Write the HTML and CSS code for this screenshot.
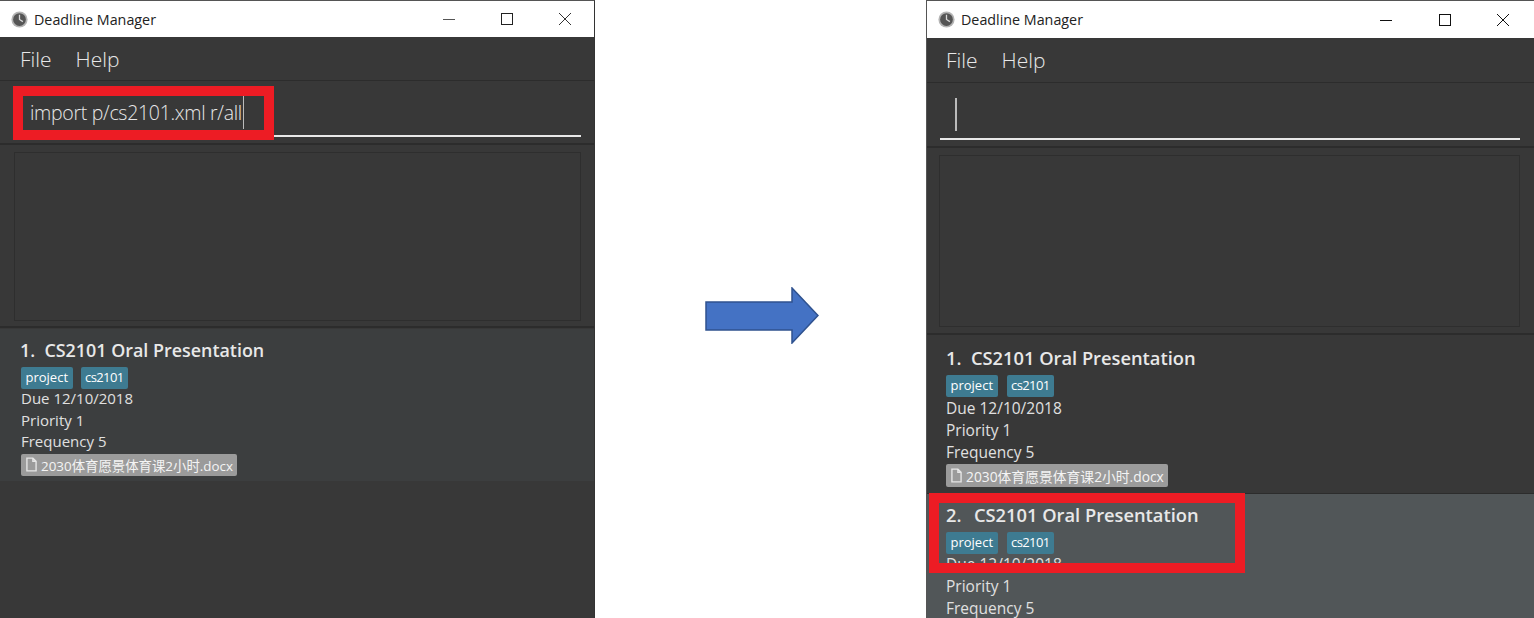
FILE: index.html
```html
<!DOCTYPE html>
<html lang="en">
  <head>
    <meta charset="UTF-8" />
    <title>Deadline Manager</title>
    <link rel="stylesheet" href="styles.css">
  </head>

  <body>
    <div class="window window-before">
      <div class="title-bar">
        <svg class="app-icon" viewBox="0 0 16 16">
          <circle cx="8" cy="8" r="7.6" fill="#b4b4b4" />
          <circle cx="8" cy="8" r="6" fill="#555" />
          <path d="M8 3.6V8L11.2 10" fill="none" stroke="#d8d8d8" stroke-width="1.2" />
        </svg>
        <span class="title-text">Deadline Manager</span>
        <div class="window-buttons">
          <svg viewBox="0 0 14 14"><path d="M1 7.500H13" stroke="#555" stroke-width="1" /></svg>
          <svg viewBox="0 0 14 14"><rect x="1.500" y="1.500" width="11" height="11" fill="none" stroke="#222" stroke-width="1" /></svg>
          <svg viewBox="0 0 14 14"><path d="M1 1L13 13M13 1L1 13" stroke="#333" stroke-width="1" /></svg>
        </div>
      </div>
      <div class="menu-bar"><span>File</span><span>Help</span></div>
      <div class="command-pane">
        <div class="command-box">
          <span class="command-text">import p/cs2101.xml r/all</span><span class="caret"></span>
        </div>
      </div>
      <div class="result-pane"><div class="result-box"></div></div>
      <div class="list-pane">
        <div class="card">
          <div class="card-title">1.&nbsp; CS2101 Oral Presentation</div>
          <div class="tags"><span class="tag">project</span><span class="tag tag-code">cs2101</span></div>
          <div class="line">Due 12/10/2018</div>
          <div class="line">Priority 1</div>
          <div class="line">Frequency 5</div>
          <div class="file-tag">
            <svg class="file-icon" viewBox="0 0 12 16"><path d="M1 1H7.500L11 4.500V15H1ZM7.500 1V4.500H11" fill="none" stroke="#e6e6e6" stroke-width="1.500" /></svg>
            <span>2030体育愿景体育课2小时.docx</span>
          </div>
        </div>
      </div>
    </div>

    <div class="arrow-gap">
      <svg class="arrow" viewBox="0 0 114 57">
        <polygon points="1,15 87,15 87,1 113,28.500 87,56 87,43 1,43" fill="#4472c4" stroke="#2f528f" stroke-width="1.500" />
      </svg>
    </div>

    <div class="window window-after">
      <div class="title-bar">
        <svg class="app-icon" viewBox="0 0 16 16">
          <circle cx="8" cy="8" r="7.6" fill="#b4b4b4" />
          <circle cx="8" cy="8" r="6" fill="#555" />
          <path d="M8 3.6V8L11.2 10" fill="none" stroke="#d8d8d8" stroke-width="1.2" />
        </svg>
        <span class="title-text">Deadline Manager</span>
        <div class="window-buttons">
          <svg viewBox="0 0 14 14"><path d="M1 7.500H13" stroke="#111" stroke-width="1" /></svg>
          <svg viewBox="0 0 14 14"><rect x="1.500" y="1.500" width="11" height="11" fill="none" stroke="#111" stroke-width="1" /></svg>
          <svg viewBox="0 0 14 14"><path d="M1 1L13 13M13 1L1 13" stroke="#111" stroke-width="1" /></svg>
        </div>
      </div>
      <div class="menu-bar"><span>File</span><span>Help</span></div>
      <div class="command-pane">
        <div class="command-box"><span class="caret"></span></div>
      </div>
      <div class="result-pane"><div class="result-box"></div></div>
      <div class="list-pane">
        <div class="card">
          <div class="card-title">1.&nbsp; CS2101 Oral Presentation</div>
          <div class="tags"><span class="tag">project</span><span class="tag tag-code">cs2101</span></div>
          <div class="line">Due 12/10/2018</div>
          <div class="line">Priority 1</div>
          <div class="line">Frequency 5</div>
          <div class="file-tag">
            <svg class="file-icon" viewBox="0 0 12 16"><path d="M1 1H7.500L11 4.500V15H1ZM7.500 1V4.500H11" fill="none" stroke="#e6e6e6" stroke-width="1.500" /></svg>
            <span>2030体育愿景体育课2小时.docx</span>
          </div>
        </div>
        <div class="card card-selected">
          <div class="card-title"><span class="card-index">2.</span>&nbsp; CS2101 Oral Presentation</div>
          <div class="tags"><span class="tag">project</span><span class="tag tag-code">cs2101</span></div>
          <div class="line">Due 12/10/2018</div>
          <div class="line">Priority 1</div>
          <div class="line">Frequency 5</div>
        </div>
      </div>
    </div>

    <div class="highlight highlight-command"></div>
    <div class="highlight highlight-card"></div>
  </body>
</html>
```

FILE: styles.css
```css
body {
  margin: 0;
  width: 1534px;
  height: 618px;
  display: flex;
  overflow: hidden;
  background-color: #fff;
  font-family: "Open Sans", "Noto Sans CJK SC", sans-serif;
}

.window {
  height: 618px;
  display: flex;
  flex-direction: column;
  flex-shrink: 0;
  box-sizing: border-box;
  overflow: hidden;
  background-color: #383838;
  border-top: 1px solid #555;
  color: #e8e8e8;
}

.window-before {
  width: 595px;
  border-right: 1px solid #333;
  --title-height: 36px;
  --menu-height: 44px;
  --command-height: 64px;
  --result-height: 183px;
  --result-bottom: 5px;
  --line-height: 21.5px;
  --card-left: 21px;
  --card-title-shift: -1px;
  --list-top: 1px;
  --title-size: 17.900px;
  --text-size: 15px;
  --tag-gap: 8px;
  --file-height: 22px;
  --file-size: 13.400px;
  --menu-left: 20px;
  --field-left: 14px;
  --field-right: 13px;
  --caret-left: 16px;
  --button-gap: 44px;
  --button-right: 22px;
}

.window-after {
  width: 608px;
  border-left: 1px solid #555;
  --title-height: 37px;
  --menu-height: 45px;
  --command-height: 65px;
  --result-height: 187px;
  --result-bottom: 6px;
  --line-height: 22px;
  --card-left: 19px;
  --card-title-shift: 0px;
  --list-top: 2px;
  --title-size: 18.300px;
  --text-size: 15.500px;
  --tag-gap: 9px;
  --file-height: 23px;
  --file-size: 13.800px;
  --menu-left: 19px;
  --field-left: 13px;
  --field-right: 14px;
  --caret-left: 14px;
  --button-gap: 44.500px;
  --button-right: 24px;
}

.arrow-gap {
  width: 331px;
  flex-shrink: 0;
  box-sizing: border-box;
  padding: 287px 0 0 110px;
}

.arrow {
  width: 114px;
  height: 57px;
}

.title-bar {
  height: var(--title-height);
  flex-shrink: 0;
  display: flex;
  align-items: center;
  padding-left: 11px;
  background-color: #fff;
  color: #222;
  font-size: 14.300px;
}

.app-icon {
  width: 17px;
  height: 17px;
  margin-right: 6px;
}

.window-buttons {
  margin-left: auto;
  display: flex;
  gap: var(--button-gap);
  padding-right: var(--button-right);
}

.window-buttons svg {
  width: 14px;
  height: 14px;
}

.menu-bar {
  height: var(--menu-height);
  flex-shrink: 0;
  box-sizing: border-box;
  display: flex;
  align-items: center;
  gap: 24px;
  padding-left: var(--menu-left);
  border-bottom: 1px solid #2c2c2c;
  font-size: 21px;
  font-weight: 300;
}

.command-pane {
  height: var(--command-height);
  flex-shrink: 0;
  box-sizing: border-box;
  padding: 0 var(--field-right) 6px var(--field-left);
  display: flex;
  border-bottom: 2px solid #2c2c2c;
}

.command-box {
  flex-grow: 1;
  display: flex;
  align-items: center;
  padding: 8px 0 0 var(--caret-left);
  border-bottom: 2px solid #e8e8e8;
  font-size: 19.500px;
  font-weight: 300;
  letter-spacing: -0.3px;
}

.caret {
  width: 1.500px;
  height: 33px;
  margin-left: 1px;
  background-color: #bbb;
}

.result-pane {
  height: var(--result-height);
  flex-shrink: 0;
  box-sizing: border-box;
  padding: 7px var(--field-right) var(--result-bottom) var(--field-left);
  display: flex;
  border-bottom: 2px solid #2c2c2c;
}

.window-after .result-pane {
  padding-left: 12px;
}

.result-box {
  flex-grow: 1;
  border: 1px solid #2e2e2e;
}

.list-pane {
  flex-grow: 1;
  min-height: 0;
  padding-top: var(--list-top);
}

.card {
  padding: 9px 0 5px var(--card-left);
  background-color: #3c3e3f;
  font-size: var(--text-size);
}

.window-after .card {
  background-color: #383838;
  border-bottom: 1px solid #2c2c2c;
}

.window-after .card-selected {
  background-color: #515658;
  border-bottom: none;
}

.card-title {
  height: 26px;
  line-height: 24px;
  margin-left: var(--card-title-shift);
  font-size: var(--title-size);
  font-weight: 600;
}

.card-index {
  margin-right: 3px;
}

.tags {
  display: flex;
  gap: var(--tag-gap);
  margin-top: 3px;
}

.window-before .tags,
.card-selected .tags {
  margin-bottom: -1px;
}

.tag {
  height: 22px;
  line-height: 21px;
  padding: 0 4.500px;
  border-radius: 2px;
  background-color: #3e7b91;
  color: #fff;
  font-size: 13px;
}

.tag-code {
  letter-spacing: -0.6px;
}

.line {
  height: var(--line-height);
  line-height: var(--line-height);
  color: #e0e0e0;
}

.file-tag {
  display: inline-flex;
  align-items: center;
  height: var(--file-height);
  margin-top: 1px;
  padding: 0 4px 0 5px;
  border-radius: 2px;
  background-color: #9b9b9b;
  color: #f4f4f4;
  font-size: var(--file-size);
}

.file-icon {
  width: 11px;
  height: 15px;
  margin-right: 4px;
}

.highlight {
  position: absolute;
  box-sizing: border-box;
  border: 10px solid #ed1c24;
}

.highlight-command {
  left: 13px;
  top: 86px;
  width: 261px;
  height: 54px;
}

.highlight-card {
  left: 929px;
  top: 493px;
  width: 316px;
  height: 80px;
}
```
